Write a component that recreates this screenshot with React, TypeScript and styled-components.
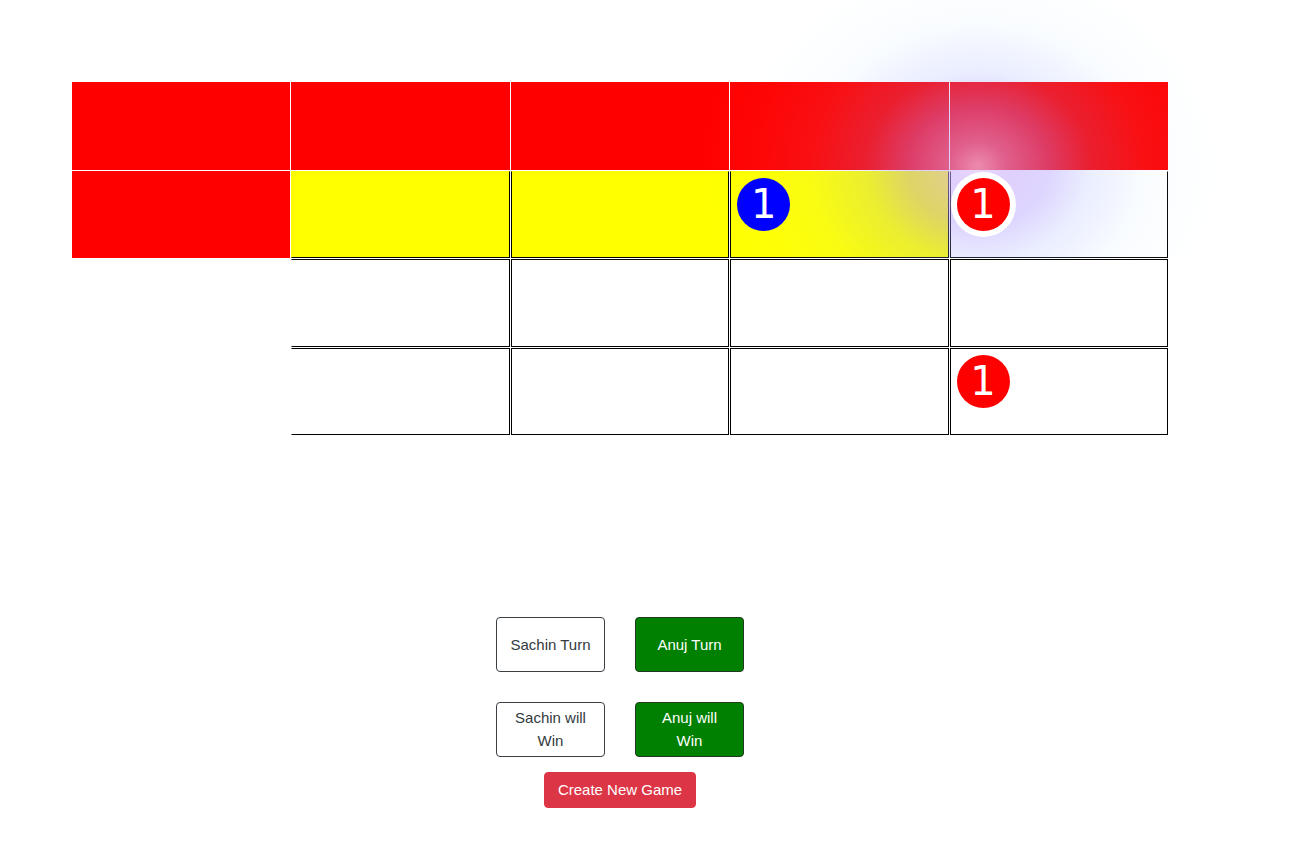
import React from "react";
import styled, { createGlobalStyle, css } from "styled-components";

const GlobalStyle = createGlobalStyle`
  html, body {
    margin: 0;
    padding: 0;
    background: #ffffff;
  }
  body {
    font-family: "Liberation Sans", Arial, sans-serif;
    color: #212529;
  }
`;

const Page = styled.div`
  position: relative;
  width: 1311px;
  min-height: 857px;
  padding: 82px 0 0 72px;
  box-sizing: border-box;
`;

const Glow = styled.div`
  position: absolute;
  top: 0;
  left: 700px;
  width: 560px;
  height: 258px;
  z-index: 1;
  pointer-events: none;
  background: radial-gradient(
    ellipse 280px 240px at 278px 166px,
    rgba(228, 198, 248, 0.7) 0%,
    rgba(200, 170, 250, 0.56) 10%,
    rgba(170, 150, 255, 0.4) 25%,
    rgba(145, 165, 255, 0.19) 40%,
    rgba(175, 215, 255, 0.07) 60%,
    rgba(205, 235, 255, 0.025) 80%,
    rgba(215, 240, 255, 0) 100%
  );
`;

const Board = styled.div`
  display: grid;
  grid-template-columns: repeat(5, 1fr);
  grid-auto-rows: 87.5px;
  gap: 1px;
  width: 1096px;
`;

type Fill = "red" | "yellow" | "white" | "none";

const Cell = styled.div<{ $fill: Fill; $bordered: boolean; $noTop?: boolean; $noLeft?: boolean }>`
  box-sizing: border-box;
  padding: 6px;
  display: flex;
  align-items: flex-start;
  background: ${(p) =>
    p.$fill === "red" ? "#ff0000" : p.$fill === "yellow" ? "#ffff00" : "#ffffff"};
  ${(p) =>
    p.$bordered &&
    css`
      border: 1px solid #000000;
      ${p.$noTop && "border-top-color: transparent;"}
      ${p.$noLeft && "border-left-color: transparent;"}
    `}
`;

const Badge = styled.div<{ $color: string; $ring?: boolean }>`
  position: relative;
  z-index: 2;
  width: 53px;
  height: 53px;
  border-radius: 50%;
  background: ${(p) => p.$color};
  color: #ffffff;
  font-family: "DejaVu Sans", sans-serif;
  font-size: 40px;
  line-height: 1;
  display: flex;
  align-items: center;
  justify-content: center;
  ${(p) => p.$ring && "box-shadow: 0 0 0 6px #ffffff;"}
`;

const Controls = styled.div`
  width: 1096px;
  margin-top: 182px;
  display: flex;
  flex-direction: column;
  align-items: center;
`;

const ButtonRow = styled.div<{ $gapBelow: number }>`
  display: flex;
  gap: 30px;
  margin-bottom: ${(p) => p.$gapBelow}px;
`;

const PlayerButton = styled.button<{ $active?: boolean }>`
  box-sizing: border-box;
  width: 109px;
  height: 55px;
  padding: 0 12px 1px;
  border-radius: 4px;
  border: 1px solid ${(p) => (p.$active ? "#1f3a1f" : "#3a3f44")};
  background: ${(p) => (p.$active ? "#008000" : "#ffffff")};
  color: ${(p) => (p.$active ? "#ffffff" : "#343a40")};
  font-family: "Liberation Sans", Arial, sans-serif;
  font-size: 15px;
  line-height: 23px;
  text-align: center;
  display: flex;
  align-items: center;
  justify-content: center;
  cursor: pointer;
`;

const CreateButton = styled.button`
  box-sizing: border-box;
  width: 152px;
  height: 36px;
  padding: 6px 12px;
  border-radius: 4px;
  border: 1px solid #dc3545;
  background: #dc3545;
  color: #ffffff;
  font-family: "Liberation Sans", Arial, sans-serif;
  font-size: 15px;
  line-height: 22px;
  cursor: pointer;
`;

type CellSpec = {
  fill: Fill;
  bordered: boolean;
  badge?: { color: string; ring?: boolean };
};

const head: CellSpec = { fill: "red", bordered: false };
const empty: CellSpec = { fill: "none", bordered: false };
const yellow: CellSpec = { fill: "yellow", bordered: true };
const white: CellSpec = { fill: "white", bordered: true };

const rows: CellSpec[][] = [
  [head, head, head, head, head],
  [
    head,
    yellow,
    yellow,
    { fill: "yellow", bordered: true, badge: { color: "#0000ff" } },
    { fill: "white", bordered: true, badge: { color: "#ff0000", ring: true } },
  ],
  [empty, white, white, white, white],
  [empty, white, white, white, { fill: "white", bordered: true, badge: { color: "#ff0000" } }],
];

export default function App() {
  return (
    <>
      <GlobalStyle />
      <Page>
        <Glow />
        <Board>
          {rows.map((row, r) =>
            row.map((c, i) => (
              <Cell
                key={`${r}-${i}`}
                $fill={c.fill}
                $bordered={c.bordered}
                $noTop={r === 1}
                $noLeft={i === 1}
              >
                {c.badge && (
                  <Badge $color={c.badge.color} $ring={c.badge.ring}>
                    1
                  </Badge>
                )}
              </Cell>
            ))
          )}
        </Board>
        <Controls>
          <ButtonRow $gapBelow={30}>
            <PlayerButton>Sachin Turn</PlayerButton>
            <PlayerButton $active>Anuj Turn</PlayerButton>
          </ButtonRow>
          <ButtonRow $gapBelow={15}>
            <PlayerButton>Sachin will Win</PlayerButton>
            <PlayerButton $active>Anuj will Win</PlayerButton>
          </ButtonRow>
          <CreateButton>Create New Game</CreateButton>
        </Controls>
      </Page>
    </>
  );
}
